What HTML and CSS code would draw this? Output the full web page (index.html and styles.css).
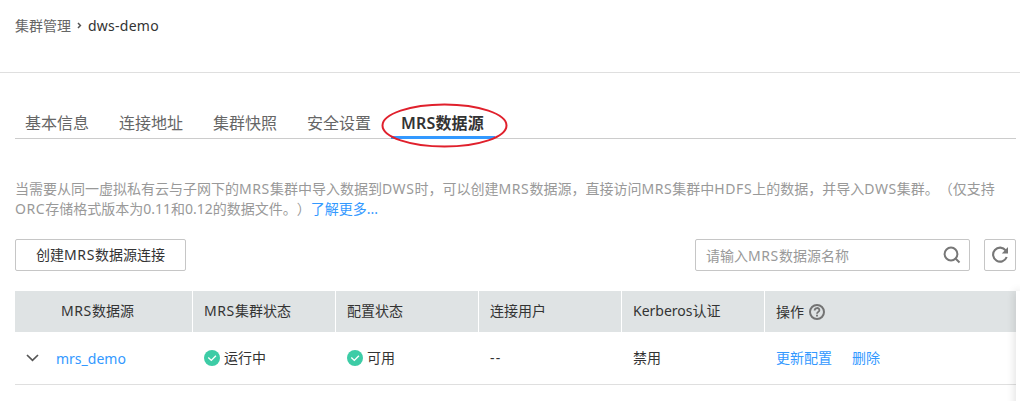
FILE: index.html
```html
<!DOCTYPE html>
<html lang="zh-CN">
<head>
<meta charset="utf-8">
<title>dws-demo</title>
<link rel="stylesheet" href="styles.css">
</head>
<body>
<header class="breadcrumb">
  <a class="crumb">集群管理</a>
  <svg class="crumb-arrow" width="5" height="7" viewBox="0 0 5 7"><path d="M1 1l2.4 2.5L1 6" fill="none" stroke="#555" stroke-width="1.5"/></svg>
  <span class="crumb-current">dws-demo</span>
</header>
<main class="content">
  <nav class="tabs">
    <a class="tab">基本信息</a>
    <a class="tab">连接地址</a>
    <a class="tab">集群快照</a>
    <a class="tab">安全设置</a>
    <a class="tab tab-active">MRS数据源
      <svg class="highlight" width="127" height="45" viewBox="0 0 127 45"><ellipse cx="63.5" cy="22.5" rx="62" ry="21" fill="none" stroke="#e0202c" stroke-width="2"/></svg>
    </a>
  </nav>
  <p class="intro">当需要从同一虚拟私有云与子网下的<span class="latin">MRS</span>集群中导入数据到<span class="latin">DWS</span>时，可以创建<span class="latin">MRS</span>数据源，直接访问<span class="latin">MRS</span>集群中<span class="latin">HDFS</span>上的数据，并导入<span class="latin">DWS</span>集群。（仅支持<br><span class="latin">ORC</span>存储格式版本为0.11和0.12的数据文件。）<a class="link">了解更多...</a></p>
  <div class="toolbar">
    <button class="create">创建<span class="latin">MRS</span>数据源连接</button>
    <div class="search">
      <span class="placeholder">请输入<span class="latin">MRS</span>数据源名称</span>
      <svg width="18" height="18" viewBox="0 0 18 18" fill="none" stroke="#777" stroke-width="2"><circle cx="8" cy="8" r="6.4"/><path d="M12.5 12.5l4 4"/></svg>
    </div>
    <button class="refresh"><svg width="18" height="18" viewBox="0 0 18 18"><path d="M14.7 4.4A7 7 0 1 0 15.7 11" fill="none" stroke="#777" stroke-width="2.1"/><path d="M17 1v6.4h-6.2z" fill="#777"/></svg></button>
  </div>
  <section class="table">
    <div class="row head">
      <div class="cell first"><span class="latin">MRS</span>数据源</div>
      <div class="cell"><span class="latin">MRS</span>集群状态</div>
      <div class="cell">配置状态</div>
      <div class="cell">连接用户</div>
      <div class="cell">Kerberos认证</div>
      <div class="cell action">操作<svg class="help" width="16" height="16" viewBox="0 0 16 16" fill="none" stroke="#737373"><circle cx="8" cy="8" r="7" stroke-width="2"/><path d="M5.6 6.5c0-3.3 4.8-3.2 4.8-.3 0 1.7-2.4 1.7-2.4 3.6" stroke-width="1.8"/><path d="M8 10.8v1.8" stroke-width="1.9"/></svg></div>
    </div>
    <div class="row body">
      <div class="cell name"><svg width="13" height="8" viewBox="0 0 13 8"><path d="M1 1l5.5 5.3L12 1" fill="none" stroke="#555" stroke-width="1.7"/></svg><a class="link">mrs_demo</a></div>
      <div class="cell"><svg class="ok" width="16" height="16" viewBox="0 0 16 16"><circle cx="8" cy="8" r="8" fill="#3dcca6"/><path d="M4.3 7.6L7.3 10.4 11.9 5.8" fill="none" stroke="#fff" stroke-width="1.4"/></svg>运行中</div>
      <div class="cell"><svg class="ok" width="16" height="16" viewBox="0 0 16 16"><circle cx="8" cy="8" r="8" fill="#3dcca6"/><path d="M4.3 7.6L7.3 10.4 11.9 5.8" fill="none" stroke="#fff" stroke-width="1.4"/></svg>可用</div>
      <div class="cell dash">--</div>
      <div class="cell">禁用</div>
      <div class="cell links"><a class="link">更新配置</a><a class="link">删除</a></div>
    </div>
  </section>
</main>
<div class="side-shadow"></div>
</body>
</html>
```
FILE: styles.css
```css
* { box-sizing: border-box; }
body {
  margin: 0;
  width: 1020px;
  height: 401px;
  overflow: hidden;
  position: relative;
  background: #fff;
  color: #333;
  font: 14px/20px "Noto Sans", "Noto Sans CJK SC", sans-serif;
  text-spacing-trim: space-all;
}
.link { color: #3399ff; }
.latin { letter-spacing: .6px; }
.breadcrumb {
  display: flex;
  align-items: center;
  height: 73px;
  padding: 0 15px 21px;
  border-bottom: 1px solid #dfdfdf;
}
.crumb { color: #666; }
.crumb-arrow { margin: 0 6px; }
.crumb-current { letter-spacing: .25px; }
.content { padding: 35px 4px 0 15px; }
.tabs {
  display: flex;
  height: 31px;
  border-bottom: 1px solid #ccc;
  font-size: 16px;
  line-height: 30px;
}
.tab {
  height: 31px;
  padding: 0 10px;
  margin-right: 10px;
  color: #666;
}
.tab-active {
  position: relative;
  color: #333;
  font-weight: 600;
  letter-spacing: .15px;
  border-bottom: 3px solid #3399ff;
  width: 104px;
  white-space: nowrap;
}
.highlight { position: absolute; left: -10px; top: -5px; }
.intro {
  margin: 40px 0 0;
  color: #999;
  white-space: nowrap;
}
.toolbar {
  display: flex;
  margin-top: 20px;
  height: 32px;
}
.create, .search, .refresh {
  height: 32px;
  border: 1px solid #c6c6c6;
  border-radius: 2px;
  background: #fff;
  color: #333;
  font: inherit;
  padding: 0;
}
.create { width: 171px; }
.search {
  display: flex;
  align-items: center;
  justify-content: space-between;
  width: 275px;
  margin-left: auto;
  padding: 0 8px 0 10px;
}
.placeholder { color: #999; padding-top: 1px; }
.refresh {
  display: flex;
  align-items: center;
  justify-content: center;
  width: 32px;
  margin-left: 14px;
}
.table { margin-top: 20px; }
.row {
  display: grid;
  grid-template-columns: 178px repeat(4, 143px) 1fr;
}
.head { height: 41px; background: #dfe3e4; }
.body { height: 53px; border-bottom: 1px solid #dfdfdf; }
.cell {
  display: flex;
  align-items: center;
  padding-left: 11px;
  white-space: nowrap;
}
.head .cell { border-left: 1px solid #fff; padding-bottom: 2px; }
.head .first { border: 0; padding-left: 46px; }
.head .action { padding-bottom: 0; }
.row .cell:not(:first-child) { margin-left: -1px; padding-left: 12px; }
.head .cell:not(:first-child) { padding-left: 11px; }
.help { margin-left: 5px; margin-top: 1px; }
.ok { margin-right: 4px; }
.name { gap: 17px; }
.name .link { padding-top: 2px; }
.dash { letter-spacing: 1.2px; }
.links { gap: 20px; }
.side-shadow {
  position: absolute;
  left: 1016px;
  top: 291px;
  width: 4px;
  height: 130px;
  background: #fff;
  box-shadow: 0 0 9px rgba(0, 0, 0, .22);
}
```
